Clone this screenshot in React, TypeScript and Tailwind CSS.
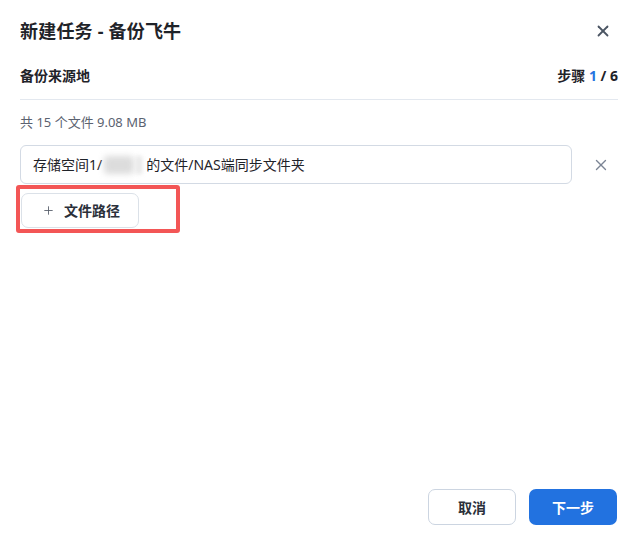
import { X, Plus } from "lucide-react";

const FONT = `font-['Noto_Sans','Noto_Sans_CJK_SC',sans-serif]`;

export default function App() {
  return (
    <div className={`${FONT} w-[630px] h-[543px] bg-white flex flex-col text-[#1f2329]`}>
      <div className="flex items-center justify-between pl-5 pr-[18px] pt-[18px]">
        <div className="text-[18px] font-bold leading-[26px] tracking-[0.2px]">新建任务 - 备份飞牛</div>
        <X size={18} strokeWidth={2.4} className="text-[#4b5563]" />
      </div>

      <div className="ml-5 mr-3 mt-[22px] flex items-center justify-between border-b border-[#e3e8ef] pb-[13px]">
        <div className="text-[14px] font-bold leading-[20px]">备份来源地</div>
        <div className="text-[14px] font-bold leading-[20px]">
          步骤 <span className="text-[#2773e0]">1</span> / 6
        </div>
      </div>

      <div className="mx-5 mt-[13px] text-[13px] leading-[18px] text-[#5b6270]">共 15 个文件 9.08 MB</div>

      <div className="mx-5 mt-[14px] flex items-center gap-[20px]">
        <div className="flex h-[39px] w-[554px] items-center rounded-[6px] border border-[#d3dae4] px-[12px] text-[14px] text-[#1f2329]">
          存储空间1/
          <span className="mx-[2px] inline-block h-[18px] w-[30px] rounded bg-[#dcdcdc] blur-[3px]" />
          <span className="inline-block h-[18px] w-[6px] bg-[#e6e6e6] blur-[2px]" />
          <span className="ml-[4px]">的文件/NAS端同步文件夹</span>
        </div>
        <X size={18} strokeWidth={1.8} className="text-[#7b8494]" />
      </div>

      <div className="ml-4 mt-[1px] w-[164px] rounded-[3px] border-4 border-[#f35656] pb-[1px] pl-[1px] pt-[4px]">
        <button className="flex h-[35px] w-[118px] items-center gap-[9px] rounded-[7px] border border-[#dbe1e8] pl-[20px] text-[14px] font-bold text-[#2b303a]">
          <Plus size={13} strokeWidth={1.6} className="text-[#555c68]" />
          文件路径
        </button>
      </div>

      <div className="flex-1" />

      <div className="flex justify-end gap-[13px] pb-[18px] pr-[13px]">
        <button className="h-[36px] w-[88px] rounded-[7px] border border-[#ccd5e1] bg-white text-[14px] font-bold text-[#2b303a]">取消</button>
        <button className="h-[36px] w-[88px] rounded-[7px] bg-[#2272e0] text-[14px] font-bold text-white">下一步</button>
      </div>
    </div>
  );
}
